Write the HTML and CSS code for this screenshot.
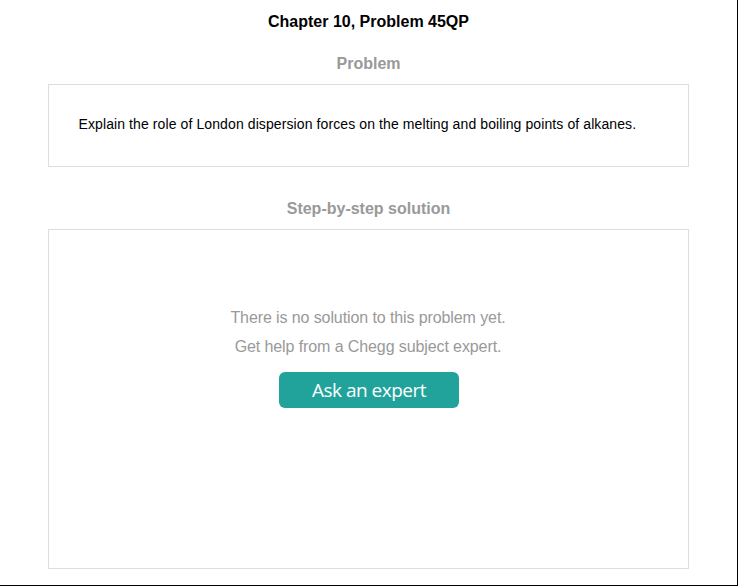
FILE: index.html
```html
<!DOCTYPE html>
<html>
<head>
<meta charset="utf-8">
<link rel="stylesheet" href="styles.css">
</head>
<body>
<div class="frame">
  <h1 class="title">Chapter 10, Problem 45QP</h1>
  <h2 class="label">Problem</h2>
  <div class="box problem-box">
    <p class="problem-text">Explain the role of London dispersion forces on the melting and boiling points of alkanes.</p>
  </div>
  <h2 class="label label-solution">Step-by-step solution</h2>
  <div class="box solution-box">
    <p class="msg msg-first">There is no solution to this problem yet.</p>
    <p class="msg">Get help from a Chegg subject expert.</p>
    <button class="ask">Ask an expert</button>
  </div>
</div>
</body>
</html>
```

FILE: styles.css
```css
html, body {
  margin: 0;
  padding: 0;
  background: #fff;
}
.frame {
  box-sizing: border-box;
  width: 738px;
  height: 586px;
  border-right: 1px solid #000;
  border-bottom: 1px solid #000;
  font-family: "Liberation Sans", Arial, sans-serif;
  display: flex;
  flex-direction: column;
  align-items: center;
  padding-top: 12px;
}
.title {
  margin: 0;
  font-size: 16px;
  font-weight: bold;
  color: #000;
  line-height: 19px;
}
.label {
  margin: 23px 0 0 0;
  font-size: 16px;
  font-weight: bold;
  color: #999;
  line-height: 19px;
}
.label-solution {
  margin-top: 32px;
}
.box {
  box-sizing: border-box;
  width: 641px;
  border: 1px solid #ddd;
  margin-left: -1px;
}
.problem-box {
  margin-top: 11px;
  height: 83px;
  padding: 31px 30px 0 30px;
}
.problem-text {
  margin: 0;
  font-size: 14px;
  line-height: 17px;
  color: #000;
  letter-spacing: 0.1px;
}
.solution-box {
  margin-top: 11px;
  height: 340px;
  display: flex;
  flex-direction: column;
  align-items: center;
  padding-top: 78px;
}
.msg {
  margin: 0;
  font-size: 16px;
  line-height: 19px;
  color: #999;
  letter-spacing: -0.1px;
}
.msg + .msg {
  margin-top: 10px;
}
.ask {
  margin-top: 16px;
  margin-left: 2px;
  width: 180px;
  height: 36px;
  border: none;
  border-radius: 6px;
  background: #21a39b;
  color: #fff;
  font-family: "Open Sans", "Noto Sans", sans-serif;
  font-size: 19px;
  letter-spacing: -0.5px;
  padding: 0;
  line-height: 36px;
}
```
